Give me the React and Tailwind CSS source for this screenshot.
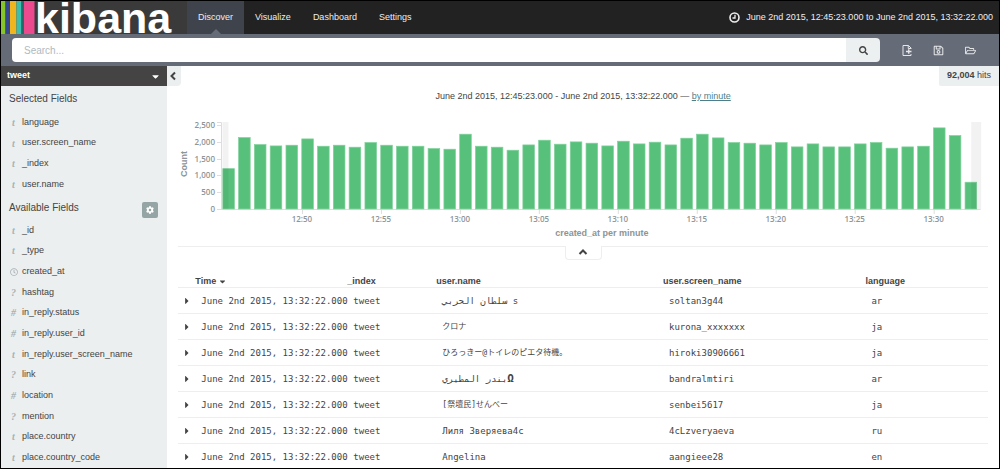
import React from 'react';
import { FaCaretDown, FaCaretRight, FaCog, FaRegClock, FaRegFolderOpen, FaRegSave, FaSearch } from 'react-icons/fa';

const tabs = ['Discover', 'Visualize', 'Dashboard', 'Settings'];

const selectedFields = [
  ['t', 'language'],
  ['t', 'user.screen_name'],
  ['t', '_index'],
  ['t', 'user.name'],
];

const availableFields = [
  ['t', '_id'],
  ['t', '_type'],
  ['date', 'created_at'],
  ['?', 'hashtag'],
  ['#', 'in_reply.status'],
  ['#', 'in_reply.user_id'],
  ['t', 'in_reply.user_screen_name'],
  ['?', 'link'],
  ['#', 'location'],
  ['?', 'mention'],
  ['t', 'place.country'],
  ['t', 'place.country_code'],
];

const counts = [
  1200, 2125, 1916, 1877, 1898, 2086, 1868, 1898, 1839, 1976, 1898, 1868,
  1868, 1797, 1779, 2226, 1868, 1839, 1749, 1907, 2047, 1928, 1997, 1958,
  1877, 2017, 1937, 1988, 1907, 2107, 2226, 2116, 1976, 1958, 1907, 1976,
  1848, 1937, 1848, 1848, 1937, 1976, 1809, 1848, 1868, 2414, 2184, 796,
];

const timeTicks = ['12:50', '12:55', '13:00', '13:05', '13:10', '13:15', '13:20', '13:25', '13:30'];

const time = 'June 2nd 2015, 13:32:22.000';

const rows = [
  { name: 'سلطان الحربي s', screenName: 'soltan3g44', language: 'ar' },
  { name: 'クロナ', screenName: 'kurona_xxxxxxx', language: 'ja' },
  { name: 'ひろっきー@トイレのピエタ待機。', screenName: 'hiroki30906661', language: 'ja' },
  { name: 'بندر المطيري', suffix: 'Ω', screenName: 'bandralmtiri', language: 'ar' },
  { name: '[祭壇民]せんべー', screenName: 'senbei5617', language: 'ja' },
  { name: 'Лиля Зверяева4с', screenName: '4cLzveryaeva', language: 'ru' },
  { name: 'Angelina', screenName: 'aangieee28', language: 'en' },
];

const Chevron = ({ d }) => (
  <svg className="size-[10px]" viewBox="0 0 10 10" fill="none" stroke="currentColor" strokeWidth="2">
    <path d={d} />
  </svg>
);

const ClockIcon = () => (
  <svg className="size-[11px]" viewBox="0 0 22 22" fill="none" stroke="currentColor" strokeWidth="3.2">
    <circle cx="11" cy="11" r="9" />
    <path d="M12 5.5v6.5H7" strokeWidth="2.6" />
  </svg>
);

const NewFileIcon = () => (
  <svg className="h-[11px] w-[10px]" viewBox="0 0 20 22" fill="none" stroke="currentColor" strokeWidth="2">
    <path d="M18 8V6l-5-5H2v20h16v-3M12.500 1v6H18" />
    <path d="M8 13h11M13.500 8.500v9" strokeWidth="2.8" />
  </svg>
);

const Logo = () => (
  <a href="#/" className="flex w-[186px] bg-[#3a3a3a]">
    <svg className="h-full w-[34px] shrink-0" viewBox="0 0 34 33">
      <rect x="0" width="4.5" height="33" fill="#86c62b" />
      <rect x="4.5" width="4.5" height="33" fill="#36498f" />
      <rect x="9" width="6.5" height="33" fill="#f0b51f" />
      <rect x="15.5" width="5" height="33" fill="#3dbfb0" />
      <rect x="20.5" width="2.5" height="33" fill="#1f6d68" />
      <rect x="23" width="10.5" height="33" fill="#ec4a8f" />
    </svg>
    <span className="text-[43px] leading-[34px] font-bold text-white">kibana</span>
  </a>
);

const NavBar = () => (
  <header className="flex h-[33px] shrink-0 bg-[#222222] text-[#eeeeee]">
    <Logo />
    <nav className="flex">
      {tabs.map((tab, i) => (
        <a
          key={tab}
          href={`#/${tab.toLowerCase()}`}
          className={i === 0 ? 'relative flex items-center bg-[#3f444c] px-[11px]' : 'flex items-center px-[11px]'}
        >
          {tab}
          {i === 0 && (
            <svg className="absolute bottom-0 left-1/2 h-[5px] w-[10px] -translate-x-1/2" viewBox="0 0 10 5">
              <path d="M0 5L5 0l5 5z" fill="#666b78" />
            </svg>
          )}
        </a>
      ))}
    </nav>
    <button type="button" className="ml-auto flex items-center gap-[6px] pr-[6px]">
      <ClockIcon />
      June 2nd 2015, 12:45:23.000 to June 2nd 2015, 13:32:22.000
    </button>
  </header>
);

const QueryBar = () => (
  <div className="flex h-8 shrink-0 items-center bg-[#666b78] pr-[23px] pl-[11px] text-[#e4e6e8]">
    <form className="flex h-6 grow">
      <input
        type="text"
        aria-label="Search"
        placeholder="Search..."
        className="min-w-0 grow rounded-l-sm bg-white px-3 text-[10px] text-[#444444] outline-none placeholder:text-[#b0babf]"
      />
      <button type="submit" aria-label="Submit search" className="flex w-[34px] items-center justify-center rounded-r-sm bg-[#ecf0f1] text-[#444444]">
        <FaSearch className="size-[9px]" />
      </button>
    </form>
    <div className="flex items-center gap-[21px] pl-[22px]">
      <button type="button" aria-label="New search"><NewFileIcon /></button>
      <button type="button" aria-label="Save search"><FaRegSave className="size-[11px]" /></button>
      <button type="button" aria-label="Load saved search"><FaRegFolderOpen className="size-[11px]" /></button>
    </div>
  </div>
);

const FieldList = ({ fields, className }) => (
  <ul className={`grid auto-rows-fr ${className}`}>
    {fields.map(([type, name]) => (
      <li key={name} className="flex items-center">
        <span className="flex w-[9px] justify-center font-['Liberation_Serif',serif] text-[10px] font-bold text-[#a9b1b4] italic">
          {type === 'date' ? <FaRegClock className="size-[8px] shrink-0" /> : type}
        </span>
        <span className="pl-1">{name}</span>
      </li>
    ))}
  </ul>
);

const Sidebar = () => (
  <aside className="w-1/6 shrink-0 bg-[#ebeff0]">
    <button type="button" className="flex h-5 w-full items-center justify-between bg-[#444444] px-[6px] font-bold text-white">
      tweet
      <FaCaretDown className="size-[11px]" />
    </button>
    <div className="px-2">
      <h5 className="pt-[6px] pb-[6px] text-[10px] leading-[14px]">Selected Fields</h5>
      <FieldList fields={selectedFields} className="h-[83px]" />
      <div className="flex h-[25px] items-start justify-between pt-[6px] pr-[1px]">
        <h5 className="text-[10px] leading-[14px]">Available Fields</h5>
        <button type="button" aria-label="Field settings" className="mt-[1px] flex size-4 shrink-0 items-center justify-center rounded-xs bg-[#95a5a6] text-white">
          <FaCog className="size-[8px]" />
        </button>
      </div>
      <FieldList fields={availableFields} className="h-62" />
    </div>
  </aside>
);

const Histogram = () => {
  const base = 97;
  const toY = (count) => base - count * 0.0336;
  return (
    <svg className="block w-full" viewBox="0 0 810 134" fontFamily="'Open Sans', sans-serif" fontSize="8" fontWeight="600" fill="#8c9598">
      <path d="M39 10.5h4.5v87H803" fill="none" stroke="#dddddd" />
      {[0, 500, 1000, 1500, 2000, 2500].map((v) => (
        <g key={v}>
          <path d={`M39 ${Math.round(toY(v)) + 0.5}h5`} stroke="#dddddd" />
          <text x="37" y={toY(v) + 3} textAnchor="end">{v.toLocaleString('en-US')}</text>
        </g>
      ))}
      {timeTicks.map((label, i) => (
        <g key={label}>
          <path d={`M${Math.round(123.6 + i * 79) + 0.5} 97v5`} stroke="#dddddd" />
          <text x={124 + i * 79} y="110" textAnchor="middle">{label}</text>
        </g>
      ))}
      {counts.map((count, i) => (
        <rect
          key={i}
          x={44.8 + i * 15.8}
          y={toY(count)}
          width="11.6"
          height={count * 0.0336}
          fill="#57c17b"
          stroke="#7fd09a"
          strokeWidth="0.7"
        />
      ))}
      <rect x="44.5" y="10" width="6" height="87" fill="#000000" opacity="0.05" />
      <rect x="793.5" y="10" width="10" height="87" fill="#000000" opacity="0.05" />
      <g fontFamily="'Liberation Sans', Arial, sans-serif" fontSize="9" fontWeight="700" textAnchor="middle">
        <text x="424" y="124">created_at per minute</text>
        <text transform="translate(9 52) rotate(-90)">Count</text>
      </g>
    </svg>
  );
};

const DocTable = () => (
  <table className="mt-[15px] w-full table-fixed text-left">
    <colgroup>
      <col className="w-[17px]" />
      <col className="w-[152px]" />
      <col className="w-[89px]" />
      <col className="w-[28%]" />
      <col className="w-[25%]" />
      <col />
    </colgroup>
    <thead>
      <tr className="h-[13px] leading-3">
        <th aria-label="Expand" />
        <th>
          <span className="flex items-center gap-[2px]">
            Time <FaCaretDown className="size-[9px]" />
          </span>
        </th>
        <th>_index</th>
        <th>user.name</th>
        <th>user.screen_name</th>
        <th>language</th>
      </tr>
    </thead>
    <tbody className="font-['DejaVu_Sans_Mono','Noto_Sans_CJK_JP',monospace]">
      {rows.map((row) => (
        <tr key={row.screenName} className="h-[26px] border-t border-[#eeeeee] leading-3 whitespace-nowrap">
          <td className="pl-[4px]">
            <button type="button" aria-label="Expand row" className="block">
              <FaCaretRight className="size-[10px]" />
            </button>
          </td>
          <td className="pl-[6px]">{time}</td>
          <td className="pl-[6px]">tweet</td>
          <td className={row.language === 'ja' ? 'pl-[6px] text-[8px]' : 'pl-[6px]'}>
            {row.name}
            {row.suffix && <strong className="text-[11px]">{row.suffix}</strong>}
          </td>
          <td className="pl-[6px]">{row.screenName}</td>
          <td className="pl-[6px]">{row.language}</td>
        </tr>
      ))}
    </tbody>
  </table>
);

const App = () => (
  <div className="flex h-screen flex-col overflow-hidden border border-black bg-white font-['Liberation_Sans',Arial,sans-serif] text-[9px] text-[#444444]">
    <NavBar />
    <QueryBar />
    <div className="flex min-h-0 grow">
      <Sidebar />
      <main className="min-w-0 grow">
        <div className="flex h-5 justify-between">
          <button type="button" aria-label="Collapse sidebar" className="flex w-[14px] items-center justify-center rounded-br-sm bg-[#ebeff0] pr-[2px]">
            <Chevron d="M7 1.500L3.500 5L7 8.500" />
          </button>
          <div className="flex items-center rounded-bl-xs bg-[#ebeff0] px-2">
            <span><strong>92,004</strong> hits</span>
          </div>
        </div>
        <div className="px-[11px]">
          <p className="mt-1 mb-[10px] text-center leading-3">
            June 2nd 2015, 12:45:23.000 - June 2nd 2015, 13:32:22.000 —{' '}
            <a href="#interval" className="text-[#4d7f8a] underline">by minute</a>
          </p>
          <Histogram />
          <div className="flex h-[14px] justify-center border-t border-[#eeeeee]">
            <button type="button" aria-label="Toggle chart" className="-mt-px flex h-[14px] w-[37px] items-center justify-center rounded-b-sm border border-t-0 border-[#eeeeee] bg-white">
              <Chevron d="M1.500 7L5 3.500L8.500 7" />
            </button>
          </div>
          <DocTable />
        </div>
      </main>
    </div>
  </div>
);

export default App;
